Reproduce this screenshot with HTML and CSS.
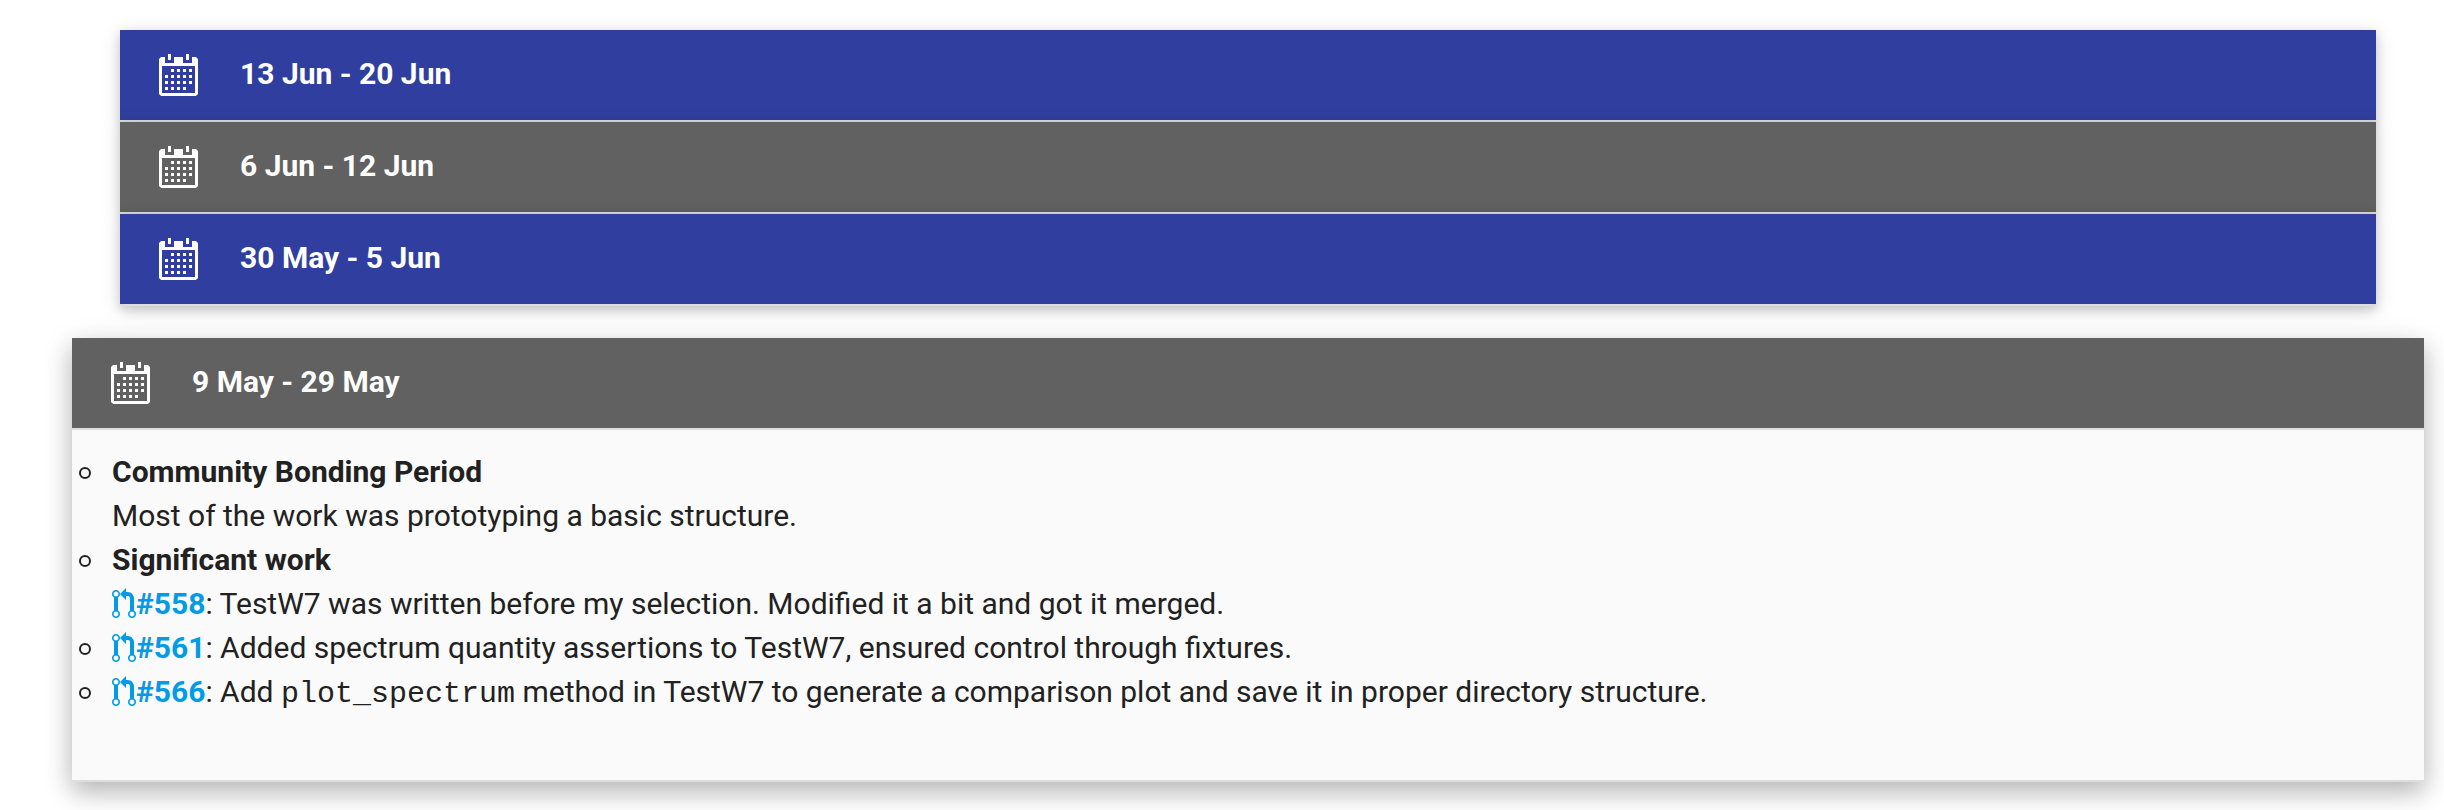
FILE: index.html
```html
<!DOCTYPE html>
<html lang="en">
<head>
<meta charset="utf-8">
<title>Weekly progress</title>
<link rel="stylesheet" href="styles.css">
</head>
<body>
<svg class="defs" width="0" height="0" aria-hidden="true">
  <symbol id="calendar" viewBox="0 0 13 14">
    <path fill="currentColor" fill-rule="evenodd" d="M.7 1H2v2h3V1h3v2h3V1h1.300L13 1.700V13.300L12.300 14H.7L0 13.300V1.700zM1 4v9h11V4zM3 0h1v2H3zM9 0h1v2H9zM4 5h1v1H4zM6 5h1v1H6zM8 5h1v1H8zM10 5h1v1h-1zM2 7h1v1H2zM4 7h1v1H4zM6 7h1v1H6zM8 7h1v1H8zM10 7h1v1h-1zM2 9h1v1H2zM4 9h1v1H4zM6 9h1v1H6zM8 9h1v1H8zM10 9h1v1h-1zM2 11h1v1H2zM4 11h1v1H4zM6 11h1v1H6zM8 11h1v1H8z"/>
  </symbol>
  <symbol id="pull-request" viewBox="0 0 12 16">
    <path fill="currentColor" fill-rule="evenodd" d="M11 11.28V5c-.03-.78-.34-1.470-.94-2.060C9.460 2.350 8.780 2.030 8 2H7V0L4 3l3 3V4h1c.27.02.48.11.69.31.21.2.3.42.31.69v6.280A1.993 1.993 0 0 0 10 15a1.993 1.993 0 0 0 1-3.720zm-1 2.920c-.66 0-1.200-.55-1.200-1.200 0-.65.55-1.200 1.200-1.200.65 0 1.200.55 1.200 1.200 0 .65-.55 1.200-1.200 1.200zM4 3c0-1.110-.89-2-2-2a1.993 1.993 0 0 0-1 3.720v6.560A1.993 1.993 0 0 0 2 15a1.993 1.993 0 0 0 1-3.720V4.720c.59-.34 1-.98 1-1.720zm-.8 10c0 .66-.55 1.200-1.200 1.200-.65 0-1.200-.55-1.200-1.200 0-.65.55-1.200 1.200-1.200.65 0 1.200.55 1.200 1.200zM2 4.200C1.340 4.200.8 3.650.8 3c0-.65.55-1.200 1.200-1.200.65 0 1.200.55 1.200 1.200 0 .65-.55 1.200-1.200 1.200z"/>
  </symbol>
</svg>
<ul class="collapsible">
  <li class="item">
    <div class="header indigo"><svg class="calendar"><use href="#calendar"/></svg><b class="dates">13 Jun - 20 Jun</b></div>
  </li>
  <li class="item">
    <div class="header grey"><svg class="calendar"><use href="#calendar"/></svg><b class="dates">6 Jun - 12 Jun</b></div>
  </li>
  <li class="item">
    <div class="header indigo"><svg class="calendar"><use href="#calendar"/></svg><b class="dates">30 May - 5 Jun</b></div>
  </li>
  <li class="item active">
    <div class="header grey"><svg class="calendar"><use href="#calendar"/></svg><b class="dates">9 May - 29 May</b></div>
    <div class="body">
      <ul class="notes">
        <li class="note"><b>Community Bonding Period</b><br>Most of the work was prototyping a basic structure.</li>
        <li class="note"><b>Significant work</b><br><a class="pr"><svg class="pr-icon"><use href="#pull-request"/></svg>#558</a>: TestW7 was written before my selection. Modified it a bit and got it merged.</li>
        <li class="note"><a class="pr"><svg class="pr-icon"><use href="#pull-request"/></svg>#561</a>: Added spectrum quantity assertions to TestW7, ensured control through fixtures.</li>
        <li class="note"><a class="pr"><svg class="pr-icon"><use href="#pull-request"/></svg>#566</a>: Add <code class="code">plot_spectrum</code> method in TestW7 to generate a comparison plot and save it in proper directory structure.</li>
      </ul>
    </div>
  </li>
</ul>
</body>
</html>
```

FILE: styles.css
```css
*, *::before { box-sizing: border-box; }
body {
  margin: 0;
  height: 810px;
  overflow: hidden;
  background: #fff;
  color: #212121;
  font: 30px/44px Roboto, sans-serif;
}
.defs { display: block; }
.collapsible {
  display: flow-root;
  list-style: none;
  margin: 0;
  padding: 30px 20px 0 72px;
}
.item {
  margin: 0 48px;
  box-shadow: 0 4px 10px rgba(0, 0, 0, .16), 0 4px 20px rgba(0, 0, 0, .12);
}
.item.active {
  margin: 32px 0 0;
  box-shadow: 0 10px 22px rgba(0, 0, 0, .18), 0 8px 30px rgba(0, 0, 0, .15);
}
.header {
  display: flex;
  align-items: center;
  gap: 42px;
  height: 92px;
  padding: 0 39px;
  border-bottom: 2px solid #ddd;
  color: #fff;
}
.indigo { background: #303f9f; background-clip: padding-box; }
.grey { background: #616161; background-clip: padding-box; }
.calendar { width: 39px; height: 42px; }
.dates { padding-bottom: 2px; }
.body {
  height: 352px;
  padding-top: 20px;
  background: #fafafa;
  border-bottom: 2px solid #ddd;
}
.notes { list-style: none; margin: 0; padding: 0; }
.note {
  position: relative;
  padding-left: 40px;
  white-space: nowrap;
}
.note::before {
  content: "";
  position: absolute;
  left: 7px;
  top: 17px;
  width: 12px;
  height: 12px;
  border: 2px solid #212121;
  border-radius: 50%;
}
.pr { color: #039be5; font-weight: 700; }
.pr-icon { width: 24px; height: 32px; vertical-align: -6px; }
.code { font-family: "Liberation Mono", monospace; font-size: 30px; line-height: 1; }
```
